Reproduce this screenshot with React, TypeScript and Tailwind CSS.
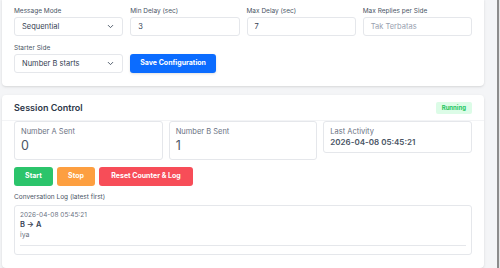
import { ChevronDown } from 'lucide-react';

function Field({ label, children }: { label: string; children: React.ReactNode }) {
  return (
    <div className="flex flex-col gap-[2px]">
      <label className="text-[6.5px] leading-[8px] text-gray-600">{label}</label>
      {children}
    </div>
  );
}

function Select({ value }: { value: string }) {
  return (
    <div className="flex h-[19px] items-center justify-between rounded-[3px] border border-gray-200 bg-white px-[7px] text-[7.5px] text-gray-700">
      <span>{value}</span>
      <ChevronDown size={9} strokeWidth={2.5} className="text-gray-600" />
    </div>
  );
}

function Input({ value, placeholder }: { value?: string; placeholder?: string }) {
  return (
    <div className="flex h-[19px] items-center rounded-[3px] border border-gray-200 bg-white px-[7px] text-[7.5px]">
      {value ? (
        <span className="text-gray-700">{value}</span>
      ) : (
        <span className="text-gray-400">{placeholder}</span>
      )}
    </div>
  );
}

export default function App() {
  return (
    <div
      className="flex h-[268px] w-[500px] overflow-hidden bg-[#f4f5f7]"
      style={{ fontFamily: 'Inter, "Noto Sans", sans-serif' }}
    >
      <div className="flex w-[497px] flex-col gap-[9px] pl-[2px] pr-[13px]">
        {/* Config card */}
        <div className="-mt-[3px] rounded-[4px] bg-white px-[12px] pb-[13px] pt-[10px] shadow-sm">
          <div className="grid grid-cols-4 gap-x-[7px]">
            <Field label="Message Mode">
              <Select value="Sequential" />
            </Field>
            <Field label="Min Delay (sec)">
              <Input value="3" />
            </Field>
            <Field label="Max Delay (sec)">
              <Input value="7" />
            </Field>
            <Field label="Max Replies per Side">
              <Input placeholder="Tak Terbatas" />
            </Field>
          </div>
          <div className="mt-[8px] grid grid-cols-4 items-end gap-x-[7px]">
            <Field label="Starter Side">
              <Select value="Number B starts" />
            </Field>
            <div>
              <button className="h-[19px] rounded-[3px] bg-[#0b6cff] px-[10px] text-[7px] font-bold text-white shadow-sm">
                Save Configuration
              </button>
            </div>
          </div>
        </div>

        {/* Session card */}
        <div className="flex-1 rounded-[4px] bg-white shadow-sm">
          <div className="flex h-[26px] items-center justify-between border-b border-gray-100 px-[12px]">
            <h2 className="text-[9px] font-semibold leading-[12px] text-[#2d3748]">Session Control</h2>
            <span className="rounded-[2px] bg-[#dcfce7] px-[6px] py-[2.5px] text-[6px] font-bold leading-[7px] text-[#22c55e]">
              Running
            </span>
          </div>
          <div className="px-[12px]">
            <div className="grid grid-cols-3 items-start gap-x-[6px]">
              <div className="h-[39px] rounded-[3px] border border-gray-200 px-[6px] pt-[5px]">
                <div className="text-[7.5px] leading-[10px] text-gray-500">Number A Sent</div>
                <div className="mt-[1px] text-[12.5px] leading-[15px] text-gray-600">0</div>
              </div>
              <div className="h-[39px] rounded-[3px] border border-gray-200 px-[6px] pt-[5px]">
                <div className="text-[7.5px] leading-[10px] text-gray-500">Number B Sent</div>
                <div className="mt-[1px] text-[12.5px] leading-[15px] text-gray-600">1</div>
              </div>
              <div className="h-[32px] rounded-[3px] border border-gray-200 px-[6px] pt-[5px]">
                <div className="text-[7.5px] leading-[10px] text-gray-500">Last Activity</div>
                <div className="text-[8px] font-semibold leading-[10px] text-gray-600">
                  2026-04-08 05:45:21
                </div>
              </div>
            </div>

            <div className="mt-[7px] flex gap-[4px]">
              <button className="h-[19px] w-[39px] rounded-[3px] bg-[#2bc46b] text-[7px] font-bold text-white">
                Start
              </button>
              <button className="h-[19px] w-[38px] rounded-[3px] bg-[#fd9f40] text-[7px] font-bold text-white">
                Stop
              </button>
              <button className="h-[19px] w-[94px] rounded-[3px] bg-[#f74d58] text-[7px] font-bold text-white">
                Reset Counter &amp; Log
              </button>
            </div>

            <div className="mt-[7px] text-[6.5px] leading-[8px] text-gray-600">
              Conversation Log (latest first)
            </div>
            <div className="mt-[4px] rounded-[3px] border border-gray-200 px-[5px] pb-[8px] pt-[5px]">
              <div className="border-b border-gray-200 pb-[5px]">
                <div className="text-[6.5px] leading-[8px] text-gray-500">2026-04-08 05:45:21</div>
                <div className="mt-[1px] text-[7.5px] font-semibold leading-[10px] text-gray-700">B → A</div>
                <div className="text-[7px] leading-[10px] text-gray-500">iya</div>
              </div>
            </div>
          </div>
        </div>
      </div>
      <div className="w-[2px] bg-[#8c8c8c]" />
      <div className="w-[1px] bg-[#e5e5e5]" />
    </div>
  );
}
